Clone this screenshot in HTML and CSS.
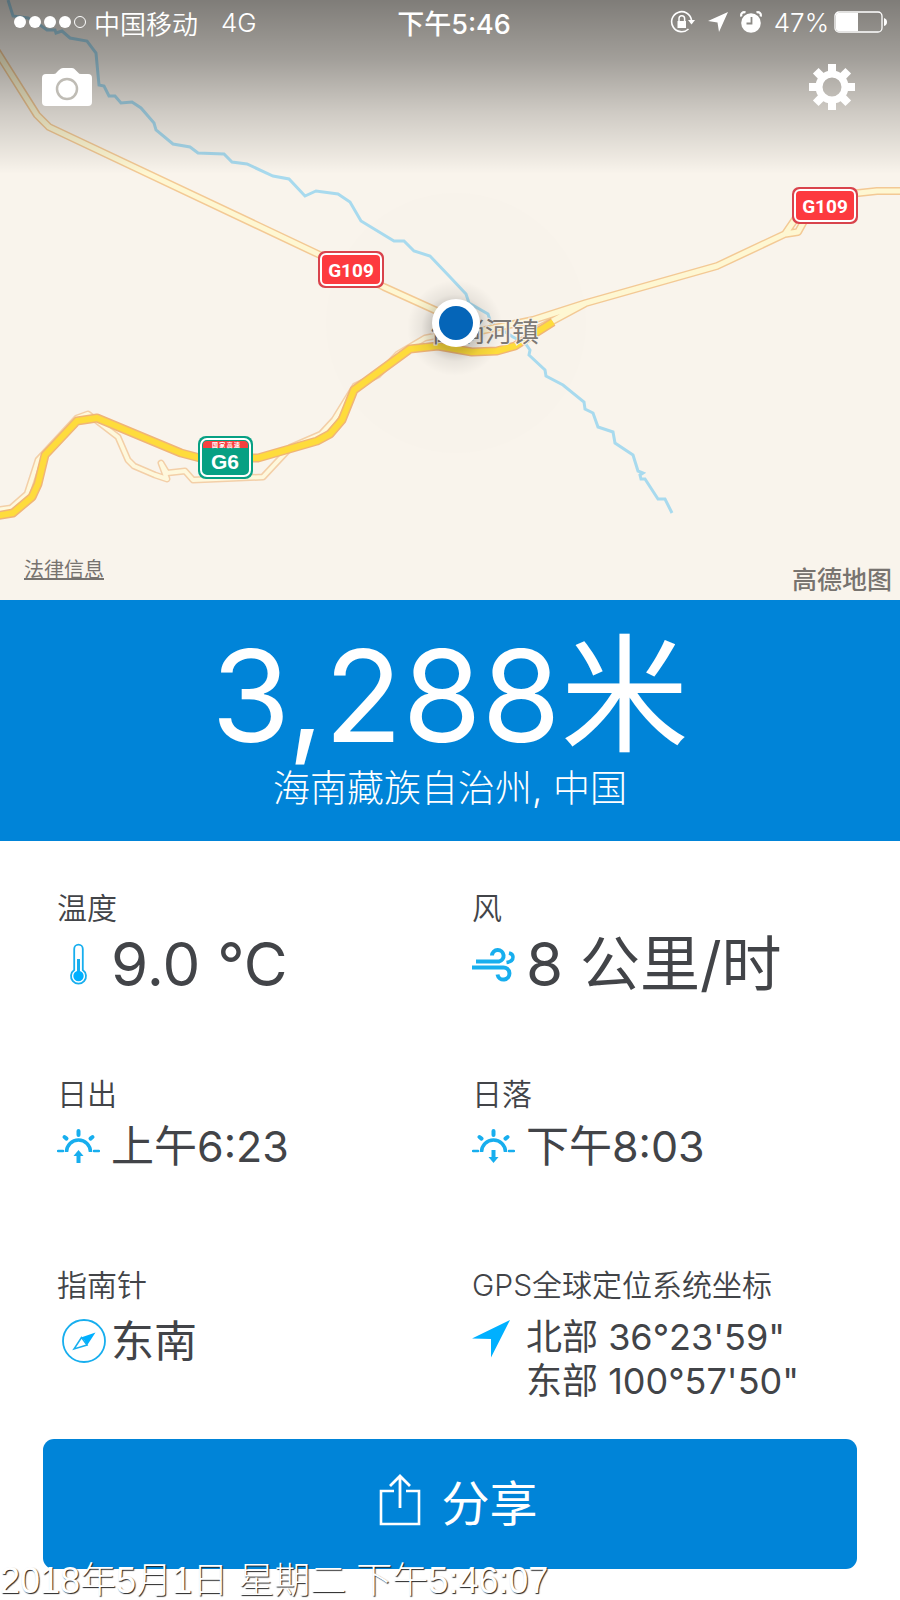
FILE: index.html
```html
<!DOCTYPE html>
<html lang="zh-CN">
	<head>
		<meta charset="utf-8">
		<meta name="viewport" content="width=device-width, initial-scale=1">
		<title>海拔</title>
		<link rel="stylesheet" href="styles.css">
	</head>
	<body>
		<section class="map">
			<svg class="mapCanvas" viewBox="0 0 900 600" preserveAspectRatio="xMidYMid slice">
				<defs>
					<radialGradient id="pinShadow">
						<stop offset="0.45" stop-color="#000" stop-opacity="0.2"/>
						<stop offset="0.7" stop-color="#000" stop-opacity="0.06"/>
						<stop offset="1" stop-color="#000" stop-opacity="0"/>
					</radialGradient>
				</defs>
				<circle cx="456" cy="323" r="130" fill="#f8f3eb"/>
				<!-- river -->
				<polyline class="river" points="8,0 13,16 28,18 40,25 47,30 55,30 56,33 62,31 70,38 87,41 96,53 99,85 104,86 109,96 115,96 121,103 132,102 141,108 154,123 156,130 173,144 190,147 198,153 224,154 232,162 247,164 273,176 289,179 305,196 316,191 338,194 350,202 361,221 394,241 404,241 414,251 430,256 450,277 466,294 469,303 488,314 491,323 513,337 525,343 530,350 529,355 545,370 546,376 563,385 584,402 585,409 593,413 598,427 613,432 615,443 633,455 638,471 643,473 640,475 641,479 645,479 658,499 665,499 672,513"/>
				<!-- old road beside the expressway -->
				<g id="side">
					<polyline class="sideCase" points="-4,510 11,508 27,494 38,460 77,418 88,414 118,437 128,460 134,466 155,475 167,479 161,463 167,473 185,471 193,480 263,477 291,447 321,434 334,420 355,386 378,375 398,354 425,338 450,333"/>
					<polyline class="sideFill" points="-4,510 11,508 27,494 38,460 77,418 88,414 118,437 128,460 134,466 155,475 167,479 161,463 167,473 185,471 193,480 263,477 291,447 321,434 334,420 355,386 378,375 398,354 425,338 450,333"/>
				</g>
				<!-- G109 -->
				<path class="roadCase" d="M-4 50L37 115 49 127 320 255 384 287 437 311 480 331 533 320 586 303 717 266 785 234 800 212 840 195 877 191 904 191M534 331L586 303M785 234L798 232 808 214"/>
				<path class="roadFill" d="M-4 50L37 115 49 127 320 255 384 287 437 311 480 331 533 320 586 303 717 266 785 234 800 212 840 195 877 191 904 191M534 331L586 303M785 234L798 232 808 214"/>
				<!-- G6 -->
				<path class="expressCase" d="M-4 516L13 513 32 497 38 484 45 455 77 421 97 418 181 453 200 458 258 458 317 441 330 434 342 420 354 390 410 349 438 346 472 352 497 351 515 346 553 322"/>
				<path class="expressFill" d="M-4 516L13 513 32 497 38 484 45 455 77 421 97 418 181 453 200 458 258 458 317 441 330 434 342 420 354 390 410 349 438 346 472 352 497 351 515 346 553 322"/>
				<!-- road shields -->
				<g>
					<rect x="318" y="251" width="66" height="37" rx="7" fill="#d9434c"/>
					<rect x="321" y="254" width="60" height="31" rx="5" fill="#fd3a3f" stroke="#fff" stroke-width="2"/>
					<text class="shieldText" x="351" y="277">G109</text>
				</g>
				<g>
					<rect x="792" y="187" width="66" height="37" rx="7" fill="#d9434c"/>
					<rect x="795" y="190" width="60" height="31" rx="5" fill="#fd3a3f" stroke="#fff" stroke-width="2"/>
					<text class="shieldText" x="825" y="213">G109</text>
				</g>
				<g>
					<rect x="198" y="436" width="55" height="43" rx="8" fill="#07a083"/>
					<rect x="201" y="439" width="49" height="37" rx="6" fill="#07a083" stroke="#fff" stroke-width="2"/>
					<path d="M203 448v-3q0-4 4-4h37q4 0 4 4v3z" fill="#f5403f"/>
					<text class="shieldTiny" x="226" y="447">国 家 高 速</text>
					<text class="shieldWide" x="225" y="469">G6</text>
				</g>
				<text class="town" x="431" y="342">倒淌河镇</text>
				<!-- current position -->
				<circle cx="455" cy="328" r="48" fill="url(#pinShadow)"/>
				<circle cx="456" cy="323" r="24" fill="#fff"/>
				<circle cx="456" cy="323" r="17" fill="#0565b8"/>
			</svg>
			<div class="shade"></div>

			<header class="statusBar">
				<div class="statusLeft">
					<svg width="74" height="14" viewBox="0 0 74 14">
						<g fill="#fff"><circle cx="7" cy="7" r="6"/><circle cx="22" cy="7" r="6"/><circle cx="37" cy="7" r="6"/><circle cx="52" cy="7" r="6"/></g>
						<circle cx="67" cy="7" r="5.5" fill="none" stroke="#fff"/>
					</svg>
					<span>中国移动</span>
					<span class="network">4G</span>
				</div>
				<div class="clock">下午5:46</div>
				<div class="statusRight">
					<svg width="26" height="24" viewBox="0 0 26 24">
						<path d="M18.500 19A10 10 0 1 1 21.500 10" fill="none" stroke="#fff" stroke-width="1.600"/>
						<path d="M18 10h7l-3.500 4.500z" fill="#fff"/>
						<path d="M7.500 11h8.500v7H7.500z" fill="#fff"/>
						<path d="M9 11V8.500a2.800 2.800 0 0 1 5.600 0V11" fill="none" stroke="#fff" stroke-width="1.500"/>
					</svg>
					<svg width="20" height="20" viewBox="0 0 20 20"><path d="M20 0L11 20 9.500 10.500 0 9z" fill="#fff"/></svg>
					<svg width="22" height="22" viewBox="0 0 22 22">
						<circle cx="11" cy="12" r="9.800" fill="#fff"/>
						<path d="M1.500 5.500a3 3 0 0 1 4-4M20.500 5.500a3 3 0 0 0-4-4" fill="none" stroke="#fff" stroke-width="2.200"/>
						<path d="M11.500 6v6.500H6.500" fill="none" stroke="#8c8a85" stroke-width="1.800"/>
					</svg>
					<span>47%</span>
					<svg class="battery" width="54" height="22" viewBox="0 0 54 22">
						<rect x="2" y="1" width="47" height="20" rx="4" fill="none" stroke="#fff" stroke-width="1.300"/>
						<path d="M5 2h20v18H5q-2 0-2-2V4q0-2 2-2z" fill="#fff"/>
						<path d="M51 7q3 1 3 4t-3 4z" fill="#fff"/>
					</svg>
				</div>
			</header>
			<nav class="tools">
				<button class="toolBtn" aria-label="相机">
					<svg width="50" height="38" viewBox="0 0 50 38">
						<path d="M4 6h8q2 0 3-2l2-2q2-2 4-2h9q2 0 3.500 2L36 4.500Q37 6 39 6h7q4 0 4 4v24q0 4-4 4H4q-4 0-4-4V10q0-4 4-4z" fill="#fff"/>
						<circle cx="25" cy="21" r="10" fill="none" stroke="#bfbcb5" stroke-width="2.500"/>
					</svg>
				</button>
				<button class="toolBtn" aria-label="设置">
					<svg width="46" height="46" viewBox="0 0 46 46">
						<g fill="#fff">
							<rect id="tooth" x="19" y="0" width="8" height="10"/>
							<use href="#tooth" transform="rotate(45 23 23)"/>
							<use href="#tooth" transform="rotate(90 23 23)"/>
							<use href="#tooth" transform="rotate(135 23 23)"/>
							<use href="#tooth" transform="rotate(180 23 23)"/>
							<use href="#tooth" transform="rotate(225 23 23)"/>
							<use href="#tooth" transform="rotate(270 23 23)"/>
							<use href="#tooth" transform="rotate(315 23 23)"/>
						</g>
						<circle cx="23" cy="23" r="13" fill="none" stroke="#fff" stroke-width="7"/>
					</svg>
				</button>
			</nav>
			<footer class="mapFoot">
				<a class="legal" href="#">法律信息</a>
				<span class="mapBrand">高德地图</span>
			</footer>
		</section>

		<section class="altitude">
			<h1>3,288米</h1>
			<p>海南藏族自治州, 中国</p>
		</section>

		<main class="readings">
			<div class="reading">
				<h2>温度</h2>
				<div class="value large">
					<svg class="icon" width="43" height="43" viewBox="0 0 43 43">
						<path d="M17.200 27V6a4.300 4.300 0 0 1 8.600 0V27a7.500 7.500 0 1 1-8.600 0z" fill="none" stroke="#17aeee" stroke-width="1.800"/>
						<path d="M21.500 16v16" stroke="#17aeee" stroke-width="3"/>
						<circle cx="21.500" cy="33" r="5.200" fill="#00b0ff"/>
					</svg>
					<span>9.0 °C</span>
				</div>
			</div>
			<div class="reading">
				<h2>风</h2>
				<div class="value large">
					<svg class="icon" width="43" height="43" viewBox="0 0 43 43">
						<g fill="none" stroke="#17aeee" stroke-width="4">
							<path d="M4 18.500h23a5.800 5.800 0 1 0-7-6"/>
							<path d="M0 24.500h31a6 6 0 1 1-5.500 7"/>
							<path d="M34.500 19.500q6.500-1 6.500-5.500 0-3-4-4" stroke-width="3.500"/>
						</g>
					</svg>
					<span>8 公里/时</span>
				</div>
			</div>
			<div class="reading">
				<h2>日出</h2>
				<div class="value">
					<svg class="icon" width="43" height="43" viewBox="0 0 43 43">
						<g fill="none" stroke="#17aeee" stroke-width="3.500">
							<path d="M9.500 27a12 12 0 0 1 24 0"/>
							<path d="M21.500 6v4M7.500 12l2 1.600M35.500 12l-2 1.600" stroke-width="4" stroke-linecap="round"/>
							<path d="M1 26h5M37 26h5" stroke-width="2.500" stroke-linecap="round"/>
							<path d="M21.500 38V29" stroke-width="4"/>
						</g>
						<path d="M16.500 31l5-6 5 6z" fill="#17aeee"/>
					</svg>
					<span>上午6:23</span>
				</div>
			</div>
			<div class="reading">
				<h2>日落</h2>
				<div class="value">
					<svg class="icon" width="43" height="43" viewBox="0 0 43 43">
						<g fill="none" stroke="#17aeee" stroke-width="3.500">
							<path d="M9.500 27a12 12 0 0 1 24 0"/>
							<path d="M21.500 6v4M7.500 12l2 1.600M35.500 12l-2 1.600" stroke-width="4" stroke-linecap="round"/>
							<path d="M1 26h5M37 26h5" stroke-width="2.500" stroke-linecap="round"/>
							<path d="M21.500 25v8" stroke-width="4"/>
						</g>
						<path d="M16.500 32l5 6 5-6z" fill="#17aeee"/>
					</svg>
					<span>下午8:03</span>
				</div>
			</div>
			<div class="reading last">
				<h2>指南针</h2>
				<div class="value">
					<svg class="icon compass" width="44" height="44" viewBox="0 0 44 44">
						<circle cx="22" cy="22" r="21" fill="none" stroke="#17aeee" stroke-width="1.800"/>
						<path d="M33.500 13.500L19 18.500 22.500 21.500 25 26.500z" fill="#00b0ff"/>
						<path d="M19.500 18.500L12 30 25 26z" fill="none" stroke="#17aeee" stroke-width="1.500"/>
					</svg>
					<span>东南</span>
				</div>
			</div>
			<div class="reading last">
				<h2>GPS全球定位系统坐标</h2>
				<div class="value coords">
					<svg class="icon" width="43" height="43" viewBox="0 0 43 43">
						<path d="M38 5L19 42.500V24L0 23.500z" fill="#00b0ff"/>
					</svg>
					<span>北部 36°23'59"<br>东部 100°57'50"</span>
				</div>
			</div>
		</main>

		<div class="shareRow">
			<button class="shareBtn">
				<svg width="42" height="52" viewBox="0 0 42 52">
					<path d="M15 17H2v33h38V17H27" fill="none" stroke="#fff" stroke-width="2.600"/>
					<path d="M21 34V2M11 12L21 2l10 10" fill="none" stroke="#fff" stroke-width="2.800"/>
				</svg>
				<span>分享</span>
			</button>
			<div class="stamp">2018年5月1日 星期二 下午5:46:07</div>
		</div>
	</body>
</html>
```
FILE: styles.css
```css
* {
	box-sizing: border-box;
}
body {
	margin: 0;
	background: #fff;
	color: #424448;
	font-family: Inter, "Noto Sans CJK SC", sans-serif;
	font-weight: 350;
}
h1, h2, p {
	margin: 0;
	font-weight: inherit;
}
button {
	border: 0;
	padding: 0;
	background: none;
	color: inherit;
	font: inherit;
	cursor: pointer;
}
svg {
	display: block;
	flex: none;
}

/* map */
.map {
	position: relative;
	display: flex;
	flex-direction: column;
	height: 600px;
	background: #f9f4ec;
	overflow: hidden;
}
.mapCanvas {
	position: absolute;
	top: 0;
	left: 0;
	width: 100%;
	height: 100%;
}
.shade {
	position: absolute;
	top: 0;
	left: 0;
	right: 0;
	height: 174px;
	background: linear-gradient(rgba(0, 0, 0, 0.49), rgba(0, 0, 0, 0.35) 34%, rgba(0, 0, 0, 0.17) 65%, rgba(0, 0, 0, 0.05) 90%, rgba(0, 0, 0, 0));
}
.river {
	fill: none;
	stroke: #a8daee;
	stroke-width: 3;
}
.roadCase, .roadFill, .sideCase, .sideFill, .expressCase, .expressFill {
	fill: none;
	stroke-linejoin: round;
}
.roadCase {
	stroke: #f3c995;
	stroke-width: 8;
}
.roadFill {
	stroke: #fef7d2;
	stroke-width: 5;
}
.sideCase {
	stroke: #f3cfa8;
	stroke-width: 7;
}
.sideFill {
	stroke: #fef8dc;
	stroke-width: 4;
}
.expressCase {
	stroke: #f0b577;
	stroke-width: 9;
}
.expressFill {
	stroke: #fedc3c;
	stroke-width: 6;
}
.shieldText, .shieldWide, .shieldTiny {
	fill: #fff;
	font-weight: bold;
	text-anchor: middle;
}
.shieldText {
	font-family: Roboto, sans-serif;
	font-size: 19px;
}
.shieldWide {
	font-family: "Liberation Sans", sans-serif;
	font-size: 21px;
}
.shieldTiny {
	font-family: "Noto Sans CJK SC", sans-serif;
	font-size: 6px;
}
.town {
	fill: #7d7975;
	stroke: #f9f4ec;
	stroke-width: 2;
	paint-order: stroke;
	font-family: "Noto Sans CJK SC", sans-serif;
	font-size: 27px;
	font-weight: 400;
}

/* status bar */
.statusBar {
	position: relative;
	display: grid;
	grid-template-columns: 1fr auto 1fr;
	align-items: center;
	height: 44px;
	padding: 0 13px;
	color: #fff;
	font-size: 26px;
}
.statusLeft, .statusRight {
	display: flex;
	align-items: center;
	gap: 7px;
}
.network {
	margin-left: 16px;
}
.clock {
	padding-left: 8px;
	font-size: 27px;
	font-weight: 450;
}
.statusRight {
	justify-content: flex-end;
	gap: 12px;
}
.battery {
	margin-left: -8px;
}
.tools {
	position: relative;
	display: flex;
	justify-content: space-between;
	align-items: center;
	height: 86px;
	padding: 0 45px 0 42px;
}
.toolBtn {
	display: block;
}
.mapFoot {
	position: relative;
	display: flex;
	justify-content: space-between;
	align-items: flex-end;
	margin-top: auto;
	padding: 0 8px 4px 24px;
	color: #77736f;
	line-height: 32px;
}
.legal {
	color: inherit;
	font-size: 20px;
	font-weight: 400;
	line-height: 52px;
	text-underline-offset: 1px;
}
.mapBrand {
	font-size: 25px;
	font-weight: 500;
}

/* altitude */
.altitude {
	padding: 26px 20px 29px;
	background: #0084d8;
	color: #fff;
	text-align: center;
}
.altitude h1 {
	font-size: 128px;
	font-weight: 400;
	line-height: 140px;
}
.altitude p {
	font-size: 37px;
	font-weight: 300;
	line-height: 46px;
}

/* readings */
.readings {
	display: grid;
	grid-template-columns: 415px 1fr;
	row-gap: 74px;
	padding: 47px 43px 0 57px;
}
.reading h2 {
	font-size: 30px;
	line-height: 40px;
}
.value {
	display: flex;
	align-items: center;
	gap: 11px;
	font-size: 43px;
	font-weight: 400;
	line-height: 64px;
}
.large {
	font-size: 60px;
	line-height: 72px;
}
.last {
	padding-top: 13px;
}
.last .value {
	line-height: 72px;
}
.compass {
	margin: 0 -6px 0 5px;
}
.last .coords {
	align-items: flex-start;
	padding-top: 10px;
	font-size: 36px;
	line-height: 44px;
}

/* share */
.shareRow {
	position: relative;
	padding: 36px 43px 31px;
}
.shareBtn {
	display: flex;
	justify-content: center;
	align-items: center;
	gap: 20px;
	width: 100%;
	height: 130px;
	padding: 0 0 8px 17px;
	border-radius: 11px;
	background: #0084d8;
	color: #fff;
	font-size: 48px;
	font-weight: 400;
}
.stamp {
	position: absolute;
	left: 0;
	bottom: 0;
	color: #fff;
	font-family: "Liberation Sans", "Noto Sans CJK SC", sans-serif;
	font-size: 36px;
	font-weight: 300;
	line-height: 38px;
	text-shadow: 1px 1px 1px #222;
	white-space: nowrap;
}
```
